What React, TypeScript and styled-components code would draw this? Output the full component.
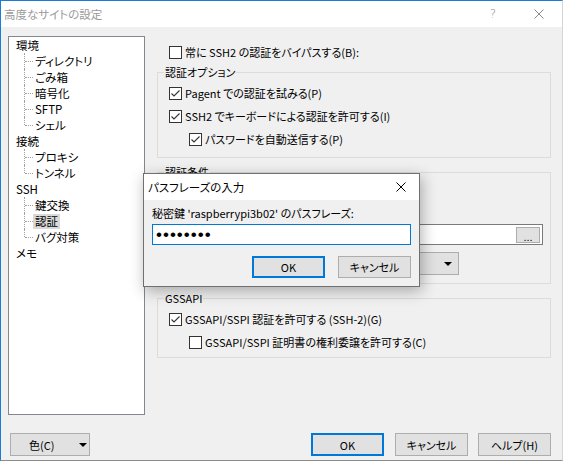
import React from "react";
import styled, { createGlobalStyle } from "styled-components";

const GlobalStyle = createGlobalStyle`
  html, body {
    margin: 0;
    padding: 0;
    background: #ffffff;
  }
  body {
    font-family: "Noto Sans CJK JP", "Noto Sans", sans-serif;
    font-size: 11px;
    font-feature-settings: "palt";
    color: #000;
  }
  * {
    box-sizing: border-box;
  }
`;

const Window = styled.div`
  position: relative;
  width: 563px;
  height: 461px;
  display: flex;
  flex-direction: column;
  border-top: 1px solid #1a7fd4;
  border-left: 1px solid #1a7fd4;
  border-right: 1px solid #d4d4d4;
  border-bottom: 1px solid #8c8c8c;
  background: #f0f0f0;
`;

const TitleBar = styled.div`
  height: 26px;
  flex: none;
  display: flex;
  align-items: center;
  background: #ffffff;
`;

const TitleText = styled.div`
  flex: 1;
  padding-left: 3px;
  color: #9a9a9a;
  font-size: 11.5px;
  line-height: 26px;
`;

const CaptionButton = styled.div`
  width: 46px;
  height: 26px;
  display: flex;
  align-items: center;
  justify-content: center;
  color: #8a8a8a;
  font-family: "DejaVu Sans", sans-serif;
  font-weight: 300;
  font-size: 12px;
`;

const Body = styled.div`
  flex: 1;
  display: grid;
  grid-template-columns: 137px 1fr;
  grid-template-rows: 379px auto;
  column-gap: 12px;
  row-gap: 14px;
  padding: 9px 11px 0 7px;
`;

const Tree = styled.div`
  background: #ffffff;
  border: 1px solid #828790;
  display: flex;
  flex-direction: column;
`;

const TreeRow = styled.div<{ $child?: boolean; $last?: boolean }>`
  position: relative;
  height: 16px;
  line-height: 16px;
  display: flex;
  align-items: center;
  padding-left: ${(p) => (p.$child ? "26px" : "7px")};

  ${(p) =>
    p.$child &&
    `
    &::before {
      content: "";
      position: absolute;
      left: 15px;
      top: 0;
      height: ${p.$last ? "8px" : "16px"};
      border-left: 1px dotted #a0a0a0;
    }
    &::after {
      content: "";
      position: absolute;
      left: 16px;
      top: 8px;
      width: 8px;
      border-top: 1px dotted #a0a0a0;
    }
  `}
`;

const TreeLabel = styled.span<{ $selected?: boolean }>`
  padding: 0 2px;
  margin-left: -2px;
  font-size: 11.5px;
  line-height: 15px;
  background: ${(p) => (p.$selected ? "#d9d9d9" : "transparent")};
`;

const Content = styled.div`
  display: flex;
  flex-direction: column;
  min-width: 0;
`;

const CheckRow = styled.div<{ $indent?: number; $mt?: number }>`
  height: 16px;
  display: flex;
  align-items: center;
  gap: 3px;
  padding-left: ${(p) => p.$indent ?? 0}px;
  margin-top: ${(p) => p.$mt ?? 0}px;
  line-height: 16px;
  white-space: nowrap;
`;

const Box = styled.span`
  width: 13px;
  height: 13px;
  flex: none;
  border: 1px solid #333333;
  background: #ffffff;
  display: flex;
  align-items: center;
  justify-content: center;
`;

const Group = styled.div<{ $mt: number; $pb: number; $gap?: number }>`
  margin-top: ${(p) => p.$mt}px;
  border: 1px solid #dcdcdc;
  padding: 0 7px ${(p) => p.$pb}px 11px;
  display: flex;
  flex-direction: column;
  gap: ${(p) => p.$gap ?? 0}px;
`;

const GroupLabel = styled.div`
  align-self: flex-start;
  margin: -9px 0 0 -5px;
  padding: 0 1px;
  height: 16px;
  line-height: 16px;
  background: #f0f0f0;
`;

const FieldLabel = styled.div<{ $mt: number }>`
  margin-top: ${(p) => p.$mt}px;
  height: 16px;
  line-height: 16px;
  white-space: nowrap;
`;

const Edit = styled.div<{ $mt?: number; $focus?: boolean }>`
  margin-top: ${(p) => p.$mt ?? 0}px;
  height: 21px;
  background: #ffffff;
  border: 1px solid ${(p) => (p.$focus ? "#0078d7" : "#7a7a7a")};
  display: flex;
  align-items: center;
  padding: 0 2px;
`;

const BrowseButton = styled.div`
  margin-left: auto;
  width: 24px;
  height: 16px;
  background: #e1e1e1;
  border: 1px solid #adadad;
  display: flex;
  align-items: flex-end;
  justify-content: center;
  line-height: 10px;
  font-family: "Liberation Sans", sans-serif;
  font-size: 11px;
`;

const Button = styled.div<{ $w: number; $focus?: boolean }>`
  width: ${(p) => p.$w}px;
  height: 23px;
  flex: none;
  background: #e1e1e1;
  border: ${(p) => (p.$focus ? "2px solid #0078d7" : "1px solid #adadad")};
  display: flex;
  align-items: center;
  justify-content: center;
  line-height: 16px;
  white-space: nowrap;
`;

const SplitButton = styled(Button)<{ $pl?: number; $gap: number; $mt?: number }>`
  justify-content: ${(p) => (p.$pl !== undefined ? "flex-start" : "flex-end")};
  padding: 0 6px 0 ${(p) => p.$pl ?? 0}px;
  gap: ${(p) => p.$gap}px;
  margin-top: ${(p) => p.$mt ?? 0}px;
`;

const Arrow = styled.span`
  width: 0;
  height: 0;
  border-left: 4px solid transparent;
  border-right: 4px solid transparent;
  border-top: 4px solid #000;
  margin-top: 1px;
`;

const Footer = styled.div`
  grid-column: 1 / -1;
  display: flex;
  align-items: center;
  padding-left: 2px;
`;

const Spacer = styled.div`
  flex: 1;
`;

const Dialog = styled.div`
  position: absolute;
  left: 142px;
  top: 172px;
  width: 277px;
  height: 114px;
  border: 1px solid #707070;
  background: #f0f0f0;
  box-shadow: 2px 4px 14px rgba(0, 0, 0, 0.3);
  display: flex;
  flex-direction: column;
`;

const DialogTitle = styled.div`
  height: 26px;
  flex: none;
  display: flex;
  align-items: center;
  background: #ffffff;
  padding-left: 4px;
  font-size: 11.5px;
`;

const DialogClose = styled.div`
  margin-left: auto;
  width: 34px;
  height: 26px;
  display: flex;
  align-items: center;
  justify-content: center;
  margin-right: 1px;
`;

const DialogBody = styled.div`
  padding: 5px 8px 8px 8px;
  display: flex;
  flex-direction: column;
`;

const Dots = styled.span`
  font-family: "Liberation Sans", sans-serif;
  font-size: 17px;
  letter-spacing: 1px;
  line-height: 16px;
  padding-left: 1px;
`;

const DialogButtons = styled.div`
  margin-top: 11px;
  display: flex;
  justify-content: flex-end;
  gap: 13px;
`;

const Check = ({ checked }: { checked?: boolean }) => (
  <Box>
    {checked && (
      <svg width="11" height="11" viewBox="0 0 11 11">
        <path d="M1.5 5.5 L4 8 L9.5 2.5" fill="none" stroke="#333" strokeWidth="1.1" />
      </svg>
    )}
  </Box>
);

const CloseIcon = ({ color }: { color: string }) => (
  <svg width="10" height="10" viewBox="0 0 10 10">
    <path d="M0.5 0.5 L9.5 9.5 M9.5 0.5 L0.5 9.5" stroke={color} strokeWidth="1" fill="none" />
  </svg>
);

type TreeItem = { label: string; child?: boolean; last?: boolean; selected?: boolean };

const treeItems: TreeItem[] = [
  { label: "環境" },
  { label: "ディレクトリ", child: true },
  { label: "ごみ箱", child: true },
  { label: "暗号化", child: true },
  { label: "SFTP", child: true },
  { label: "シェル", child: true, last: true },
  { label: "接続" },
  { label: "プロキシ", child: true },
  { label: "トンネル", child: true, last: true },
  { label: "SSH" },
  { label: "鍵交換", child: true },
  { label: "認証", child: true, selected: true },
  { label: "バグ対策", child: true, last: true },
  { label: "メモ" },
];

export default function App() {
  return (
    <>
      <GlobalStyle />
      <Window>
        <TitleBar>
          <TitleText>高度なサイトの設定</TitleText>
          <CaptionButton>?</CaptionButton>
          <CaptionButton>
            <CloseIcon color="#8a8a8a" />
          </CaptionButton>
        </TitleBar>

        <Body>
          <Tree>
            {treeItems.map((it) => (
              <TreeRow key={it.label} $child={it.child} $last={it.last}>
                <TreeLabel $selected={it.selected}>{it.label}</TreeLabel>
              </TreeRow>
            ))}
          </Tree>

          <Content>
            <CheckRow $indent={12} $mt={8}>
              <Check />
              常に SSH2 の認証をバイパスする(B):
            </CheckRow>

            <Group $mt={12} $pb={10} $gap={7}>
              <GroupLabel>認証オプション</GroupLabel>
              <CheckRow $mt={-2}>
                <Check checked />
                Pagent での認証を試みる(P)
              </CheckRow>
              <CheckRow>
                <Check checked />
                SSH2 でキーボードによる認証を許可する(I)
              </CheckRow>
              <CheckRow $indent={20}>
                <Check checked />
                パスワードを自動送信する(P)
              </CheckRow>
            </Group>

            <Group $mt={14} $pb={8}>
              <GroupLabel>認証条件</GroupLabel>
              <CheckRow $mt={5}>
                <Check />
                エージェント転送を許可する(F)
              </CheckRow>
              <FieldLabel $mt={3}>秘密鍵(K):</FieldLabel>
              <Edit $mt={4}>
                <BrowseButton>...</BrowseButton>
              </Edit>
              <SplitButton $w={290} $gap={24} $mt={7}>
                ツール(T)
                <Arrow />
              </SplitButton>
            </Group>

            <Group $mt={14} $pb={7} $gap={7}>
              <GroupLabel>GSSAPI</GroupLabel>
              <CheckRow $mt={-2}>
                <Check checked />
                GSSAPI/SSPI 認証を許可する (SSH-2)(G)
              </CheckRow>
              <CheckRow $indent={20}>
                <Check />
                GSSAPI/SSPI 証明書の権利委譲を許可する(C)
              </CheckRow>
            </Group>
          </Content>

          <Footer>
            <SplitButton $w={80} $pl={18} $gap={25}>
              色(C)
              <Arrow />
            </SplitButton>
            <Spacer />
            <Button $w={73} $focus>
              OK
            </Button>
            <Button $w={73} style={{ marginLeft: 11 }}>
              キャンセル
            </Button>
            <Button $w={73} style={{ marginLeft: 10 }}>
              ヘルプ(H)
            </Button>
          </Footer>
        </Body>

        <Dialog>
          <DialogTitle>
            パスフレーズの入力
            <DialogClose>
              <CloseIcon color="#000" />
            </DialogClose>
          </DialogTitle>
          <DialogBody>
            <FieldLabel $mt={0}>秘密鍵 'raspberrypi3b02' のパスフレーズ:</FieldLabel>
            <Edit $mt={3} $focus>
              <Dots>••••••••</Dots>
            </Edit>
            <DialogButtons>
              <Button $w={73} $focus style={{ height: 22 }}>
                OK
              </Button>
              <Button $w={73} style={{ height: 22 }}>
                キャンセル
              </Button>
            </DialogButtons>
          </DialogBody>
        </Dialog>
      </Window>
    </>
  );
}
